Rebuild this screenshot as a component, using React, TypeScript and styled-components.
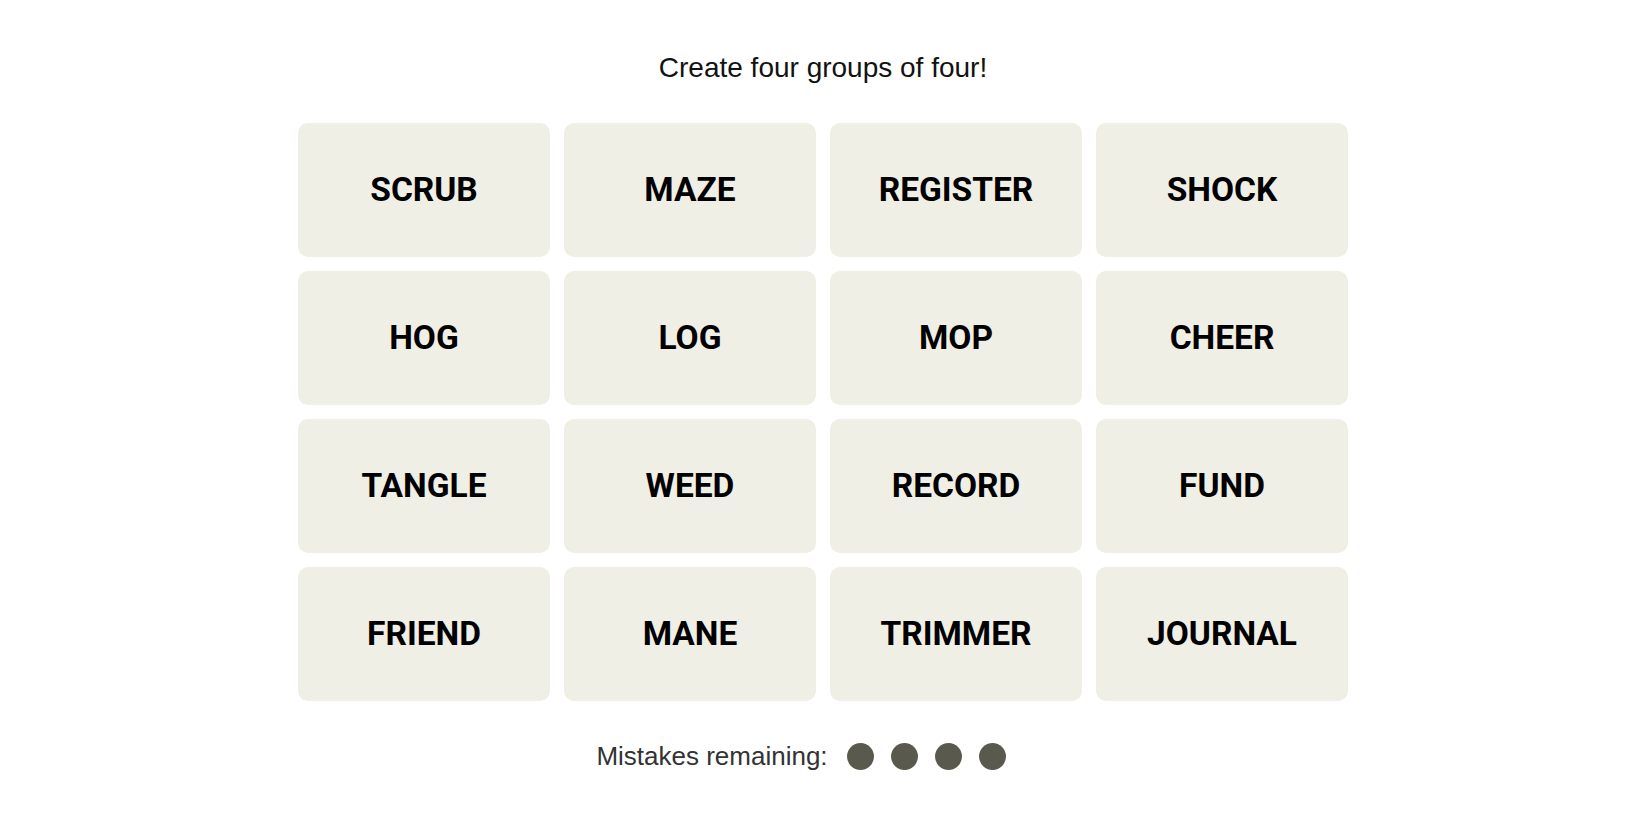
import React from "react";
import styled, { createGlobalStyle } from "styled-components";

const GlobalStyle = createGlobalStyle`
  html, body {
    margin: 0;
    padding: 0;
    background: #ffffff;
  }
  body {
    font-family: "Liberation Sans", Arial, sans-serif;
    color: #121212;
  }
`;

const Page = styled.main`
  display: flex;
  flex-direction: column;
  align-items: center;
  padding-top: 53px;
  padding-right: 4px;
`;

const Title = styled.h1`
  margin: 0;
  font-family: "Liberation Sans", Arial, sans-serif;
  font-weight: 400;
  font-size: 28px;
  line-height: 30px;
  color: #121212;
`;

const Board = styled.section`
  display: grid;
  grid-template-columns: repeat(4, 252px);
  grid-auto-rows: 134px;
  gap: 14px;
  margin-top: 40px;
`;

const Tile = styled.button`
  display: flex;
  align-items: center;
  justify-content: center;
  border: none;
  border-radius: 10px;
  background: #efefe6;
  color: #000000;
  font-family: "Roboto", "Liberation Sans", sans-serif;
  font-weight: 700;
  font-size: 33.5px;
  text-transform: uppercase;
  padding: 0 0 2px;
  cursor: pointer;
`;

const Mistakes = styled.div`
  display: flex;
  align-items: center;
  margin-top: 40px;
  margin-right: 44px;
  gap: 19px;
`;

const MistakesLabel = styled.span`
  font-family: "Liberation Sans", Arial, sans-serif;
  font-size: 26px;
  line-height: 30px;
  color: #333333;
`;

const Dots = styled.div`
  display: flex;
  gap: 17px;
`;

const Dot = styled.span`
  width: 27px;
  height: 27px;
  border-radius: 50%;
  background: #5a594e;
  display: block;
`;

const words = [
  "SCRUB", "MAZE", "REGISTER", "SHOCK",
  "HOG", "LOG", "MOP", "CHEER",
  "TANGLE", "WEED", "RECORD", "FUND",
  "FRIEND", "MANE", "TRIMMER", "JOURNAL",
];

export default function App() {
  return (
    <>
      <GlobalStyle />
      <Page>
        <Title>Create four groups of four!</Title>
        <Board>
          {words.map((w) => (
            <Tile key={w}>{w}</Tile>
          ))}
        </Board>
        <Mistakes>
          <MistakesLabel>Mistakes remaining:</MistakesLabel>
          <Dots>
            {[0, 1, 2, 3].map((i) => (
              <Dot key={i} />
            ))}
          </Dots>
        </Mistakes>
      </Page>
    </>
  );
}
